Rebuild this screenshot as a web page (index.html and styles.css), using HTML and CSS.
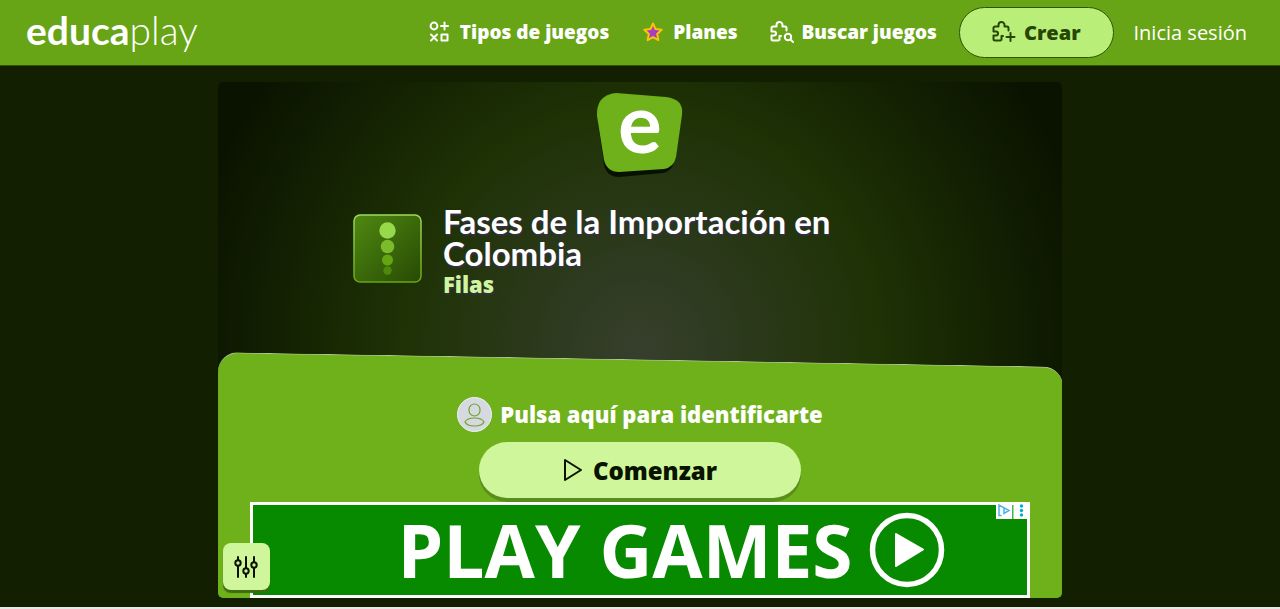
FILE: index.html
```html
<!DOCTYPE html>
<html lang="es">
  <head>
    <meta charset="UTF-8" />
    <meta name="viewport" content="width=device-width, initial-scale=1.0" />
    <title>Fases de la Importación en Colombia</title>
    <link rel="stylesheet" href="styles.css">
  </head>
  <body>
    <header class="header">
      <a href="#" class="brand"><b>educa</b>play</a>
      <nav class="nav">
        <a href="#" class="nav-link">
          <svg class="icon" viewBox="0 0 24 24">
            <circle cx="6" cy="6" r="3.4" />
            <path d="M16.500 2.500v7M13 6h7M3 14.500l6 6M9 14.500l-6 6M13.500 14.500h6v6h-6z" />
          </svg>
          Tipos de juegos
        </a>
        <a href="#" class="nav-link">
          <svg class="icon star" viewBox="0 0 24 24">
            <path d="M12 3.500l2.600 5.600 6.100.7-4.500 4.200 1.200 6.100-5.400-3-5.400 3 1.200-6.100-4.500-4.200 6.100-.7z" />
          </svg>
          Planes
        </a>
        <a href="#" class="nav-link">
          <svg class="icon" viewBox="0 0 24 24">
            <path d="M11 16H9.500v3.200a1.300 1.300 0 0 1-1.300 1.300H3a1.500 1.500 0 0 1-1.500-1.500V15.500H4a2 2 0 0 0 0-4H1.500V8A1.500 1.500 0 0 1 3 6.500h3.500V5a3 3 0 0 1 6 0v1.500H15A1.500 1.500 0 0 1 16.500 8v2.500" />
            <circle cx="18" cy="17" r="3.200" />
            <path d="M20.500 19.500l2.500 2.500" />
          </svg>
          Buscar juegos
        </a>
        <a href="#" class="nav-link create">
          <svg class="icon" viewBox="0 0 24 24">
            <path d="M11 16H9.500v3.200a1.300 1.300 0 0 1-1.300 1.300H3a1.500 1.500 0 0 1-1.500-1.500V15.500H4a2 2 0 0 0 0-4H1.500V8A1.500 1.500 0 0 1 3 6.500h3.500V5a3 3 0 0 1 6 0v1.500H15A1.500 1.500 0 0 1 16.500 8v2.500" />
            <path d="M18.500 13v8M14.500 17h8" />
          </svg>
          Crear
        </a>
        <a href="#" class="login">Inicia sesión</a>
      </nav>
    </header>

    <main class="page">
      <div class="stage">
        <section class="intro">
          <svg class="mark" viewBox="0 0 86 84">
            <path fill="#081001" d="M19 5l50 4q17 2 15 18l-7 42q-2 9-11 11l-44 4q-12 0-15-12L1 30Q-1 8 19 5z" />
            <path fill="#6fb11a" d="M19 0l50 4q18 2 16 18l-6 42q-2 10-12 12l-45 3q-12 0-15-12L0 23Q-1 2 19 0z" />
            <text x="43" y="60" text-anchor="middle">e</text>
          </svg>
          <div class="game">
            <svg class="thumb" viewBox="0 0 69 69">
              <defs>
                <linearGradient id="thumb-fill" x1="0" y1="0" x2="1" y2="1">
                  <stop offset="0" stop-color="#4f8912" />
                  <stop offset="1" stop-color="#284a03" />
                </linearGradient>
                <linearGradient id="thumb-edge" x1="0" y1="0" x2="0" y2="1">
                  <stop offset="0" stop-color="#9fd95c" />
                  <stop offset="1" stop-color="#67a514" />
                </linearGradient>
              </defs>
              <rect x="1" y="1" width="67" height="67" rx="6" fill="url(#thumb-fill)" stroke="url(#thumb-edge)" stroke-width="1.500" />
              <circle cx="34.500" cy="16.500" r="8.200" fill="#98d94b" />
              <circle cx="34.500" cy="32.500" r="6.800" fill="#7cbc2c" />
              <circle cx="34.500" cy="46" r="5.500" fill="#63a612" />
              <circle cx="34.500" cy="56.500" r="4.200" fill="#4d890b" />
            </svg>
            <div>
              <h1>Fases de la Importación en Colombia</h1>
              <p class="game-type">Filas</p>
            </div>
          </div>
        </section>

        <section class="panel">
          <button type="button" class="identify">
            <svg class="avatar" viewBox="0 0 35 35">
              <circle cx="17.500" cy="17.500" r="17" fill="#d6dae0" stroke="#eef1f3" />
              <g fill="none" stroke="#6fa32c" stroke-width="1.200">
                <rect x="12" y="7" width="11" height="12" rx="5.500" />
                <path d="M8 25q2-4 9.500-4t9.500 4q-2 4-9.500 4T8 25z" />
              </g>
            </svg>
            Pulsa aquí para identificarte
          </button>
          <button type="button" class="start">
            <svg class="play" viewBox="0 0 20 24">
              <path d="M2 2v20l16-10z" />
            </svg>
            Comenzar
          </button>
          <a href="#" class="ad">
            PLAY GAMES
            <svg class="ad-play" viewBox="0 0 76 76">
              <circle cx="38" cy="38" r="34.500" fill="none" stroke="#fff" stroke-width="5.500" />
              <path d="M27 22l27 15.500L27 54z" fill="#fff" stroke="#fff" stroke-width="2" stroke-linejoin="round" />
            </svg>
            <svg class="ad-choices" viewBox="0 0 34 17">
              <path fill="#fff" d="M0 0h34v17H0z" />
              <path fill="none" stroke="#4eb1e6" stroke-width="1.500" d="M5.500 13.500H3V3l10 5.500-5 3V6.500" />
              <path fill="#4caf50" d="M16 3h1.500v14H16z" />
              <g fill="#00aecd">
                <circle cx="25.500" cy="4" r="1.700" />
                <circle cx="25.500" cy="8.500" r="1.700" />
                <circle cx="25.500" cy="13" r="1.700" />
              </g>
            </svg>
          </a>
        </section>

        <button type="button" class="settings" aria-label="Ajustes">
          <svg viewBox="0 0 24 24">
            <path d="M4 2v3M4 11v11M12 2v11M12 19v3M20 2v5M20 13v9" />
            <circle cx="4" cy="8" r="2.700" />
            <circle cx="12" cy="16" r="2.700" />
            <circle cx="20" cy="10" r="2.700" />
          </svg>
        </button>
      </div>
    </main>
  </body>
</html>
```

FILE: styles.css
```css
* {
  box-sizing: border-box;
}

html {
  background-color: #e8e8e8;
}

body {
  margin: 0;
  min-height: calc(100vh - 2px);
  display: flex;
  flex-direction: column;
  background-color: #121f01;
  color: white;
  font-family: "Open Sans", sans-serif;
}

a {
  color: inherit;
  text-decoration: none;
}

button {
  border: none;
  font-family: inherit;
  cursor: pointer;
}

/* Header */
.header {
  display: flex;
  align-items: center;
  justify-content: space-between;
  height: 66px;
  padding: 0 33px 1px 26px;
  background-color: #67a516;
  border-bottom: 1px solid #2f5504;
}

.brand {
  font-family: Lato, sans-serif;
  font-size: 39px;
  font-weight: 300;
  line-height: 48px;
  padding-bottom: 4px;
}

.brand b {
  font-weight: 700;
}

.nav {
  display: flex;
  align-items: center;
  white-space: nowrap;
}

.nav-link {
  display: flex;
  align-items: center;
  gap: 8px;
  margin-left: 32px;
  font-size: 19px;
  font-weight: 800;
}

.icon {
  width: 24px;
  height: 24px;
  fill: none;
  stroke: currentColor;
  stroke-width: 2;
  stroke-linecap: round;
  stroke-linejoin: round;
}

.star {
  fill: #a83fc0;
  stroke: #fcc30b;
}

.create {
  height: 51px;
  margin: 0 20px 0 22px;
  padding: 0 32px;
  border: 1px solid #2f5504;
  border-radius: 26px;
  background-color: #b9ee78;
  color: #274603;
  font-size: 20px;
}

.login {
  font-size: 20px;
}

/* Game stage */
.page {
  flex: 1;
  display: flex;
  justify-content: center;
  padding: 16px 0 9px;
}

.stage {
  position: relative;
  width: 66%;
  display: flex;
  flex-direction: column;
  overflow: hidden;
  border-radius: 5px;
  background: radial-gradient(circle at 50% 265px, #363f2d 0, #1e3205 240px, #0a1300 460px);
}

.intro {
  flex: 1;
  display: flex;
  flex-direction: column;
  align-items: center;
  padding-top: 11px;
}

.mark {
  width: 86px;
  height: 84px;
  overflow: visible;
}

.mark text {
  fill: white;
  font-family: Lato, sans-serif;
  font-size: 82px;
  font-weight: 700;
}

.game {
  display: flex;
  align-items: flex-start;
  gap: 21px;
  width: 100%;
  max-width: 574px;
  margin-top: 28px;
}

.thumb {
  flex: none;
  width: 69px;
  height: 69px;
  margin-top: 9px;
}

h1,
.game-type {
  margin: 0;
  text-shadow: 1px 2px 1px #352f45;
}

h1 {
  font-family: Lato, sans-serif;
  font-size: 33px;
  font-weight: 700;
  line-height: 32px;
}

.game-type {
  color: #cff69b;
  font-size: 22px;
  font-weight: 800;
  line-height: 30px;
}

.panel {
  position: relative;
  display: flex;
  flex-direction: column;
  align-items: center;
  padding: 45px 32px 0;
}

/* slanted top edge */
.panel::before {
  content: "";
  position: absolute;
  inset: 0 0 -20px;
  border-top: 1px solid #b5c59b;
  border-radius: 20px 20px 0 0;
  background-color: #6fb11a;
  transform: skewY(1deg);
  transform-origin: left top;
}

.identify,
.start,
.ad {
  position: relative;
  display: flex;
  align-items: center;
  justify-content: center;
}

.identify {
  gap: 8px;
  padding: 0;
  background: none;
  color: white;
  font-size: 22px;
  font-weight: 800;
  line-height: 35px;
}

.avatar {
  width: 35px;
  height: 35px;
}

.start {
  gap: 10px;
  width: 322px;
  height: 56px;
  margin: 10px 0 4px;
  border-radius: 28px;
  background-color: #cff69b;
  box-shadow: 0 4px 0 #598d1e;
  color: #0a1300;
  font-size: 24px;
  font-weight: 800;
}

.play {
  width: 20px;
  height: 24px;
  fill: none;
  stroke: #0a1300;
  stroke-width: 2;
  stroke-linejoin: round;
}

/* Ad banner */
.ad {
  gap: 16px;
  width: 100%;
  height: 96px;
  padding-left: 62px;
  border: 3px solid white;
  background-color: #078a00;
  font-size: 73px;
  font-weight: 700;
  line-height: 88px;
  white-space: nowrap;
}

.ad-play {
  width: 76px;
  height: 76px;
}

.ad-choices {
  position: absolute;
  top: -3px;
  right: -3px;
  width: 34px;
  height: 17px;
}

.settings {
  position: absolute;
  left: 5px;
  bottom: 8px;
  display: flex;
  align-items: center;
  justify-content: center;
  width: 47px;
  height: 47px;
  padding: 0;
  border-radius: 8px;
  background-color: #cff69b;
  box-shadow: 0 3px 1px #3d6b12;
}

.settings svg {
  width: 24px;
  height: 24px;
  fill: none;
  stroke: #0a1300;
  stroke-width: 2;
  stroke-linecap: round;
}
```
